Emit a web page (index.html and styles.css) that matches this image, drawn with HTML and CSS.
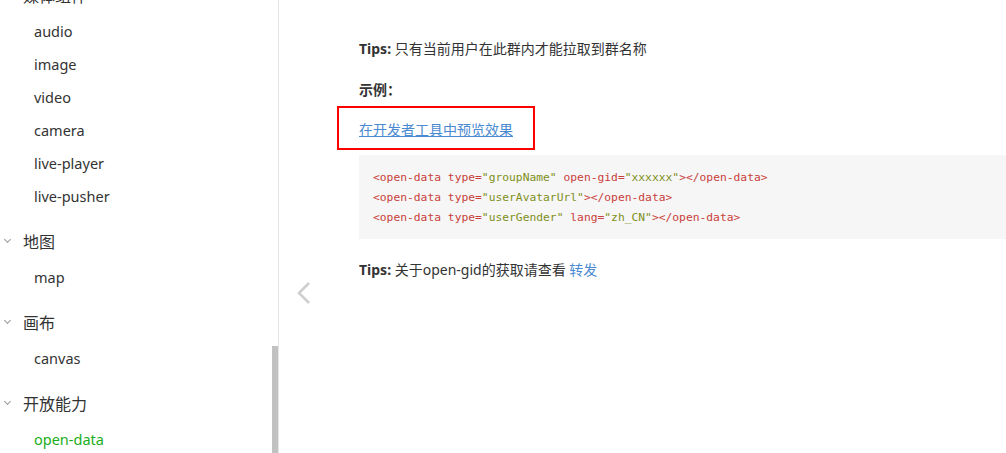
FILE: index.html
```html
<!DOCTYPE html>
<html lang="zh-CN">
<head>
<meta charset="utf-8">
<title>open-data</title>
<link rel="stylesheet" href="styles.css">
</head>
<body>
<div class="page">
  <nav class="sidebar">
    <div class="menu">
      <div class="group">
        <div class="group-title"><span class="caret"></span>媒体组件</div>
        <a class="item">audio</a>
        <a class="item">image</a>
        <a class="item">video</a>
        <a class="item">camera</a>
        <a class="item">live-player</a>
        <a class="item">live-pusher</a>
      </div>
      <div class="group">
        <div class="group-title"><span class="caret"></span>地图</div>
        <a class="item">map</a>
      </div>
      <div class="group">
        <div class="group-title"><span class="caret"></span>画布</div>
        <a class="item">canvas</a>
      </div>
      <div class="group">
        <div class="group-title"><span class="caret"></span>开放能力</div>
        <a class="item active">open-data</a>
      </div>
    </div>
    <div class="scroll-thumb"></div>
  </nav>
  <main class="content">
    <button class="prev" aria-label="上一页">
      <svg width="18" height="24" viewBox="0 0 18 24"><path d="M14 2 L4 12 L14 22" fill="none" stroke="#cfcfcf" stroke-width="2.6"/></svg>
    </button>
    <div class="article">
      <p class="tip"><strong>Tips:</strong> 只有当前用户在此群内才能拉取到群名称</p>
      <p class="label"><strong class="cjk">示例：</strong></p>
      <p class="demo"><a class="demo-link" href="#">在开发者工具中预览效果</a></p>
      <pre class="code"><code><span class="t">&lt;open-data</span> <span class="a">type=</span><span class="v">"groupName"</span> <span class="a">open-gid=</span><span class="v">"xxxxxx"</span><span class="t">&gt;&lt;/open-data&gt;</span>
<span class="t">&lt;open-data</span> <span class="a">type=</span><span class="v">"userAvatarUrl"</span><span class="t">&gt;&lt;/open-data&gt;</span>
<span class="t">&lt;open-data</span> <span class="a">type=</span><span class="v">"userGender"</span> <span class="a">lang=</span><span class="v">"zh_CN"</span><span class="t">&gt;&lt;/open-data&gt;</span></code></pre>
      <p class="tip tip-last"><strong>Tips:</strong> 关于open-gid的获取请查看 <a class="link" href="#">转发</a></p>
    </div>
  </main>
</div>
</body>
</html>
```

FILE: styles.css
```css
html, body {
  margin: 0;
  padding: 0;
  background: #fff;
}
body {
  width: 1006px;
  height: 453px;
  overflow: hidden;
  font-family: "Noto Sans", "Noto Sans CJK SC", sans-serif;
  color: #333;
}
.page {
  display: flex;
  height: 453px;
}
.sidebar {
  position: relative;
  width: 278px;
  flex: 0 0 278px;
  border-right: 1px solid #e6e6e6;
  overflow: hidden;
}
.menu {
  margin-top: -36px;
}
.group {
  display: flex;
  flex-direction: column;
  padding-top: 9px;
}
.group:first-child {
  padding-top: 11px;
}
.group-title {
  display: flex;
  align-items: center;
  height: 39px;
  padding-left: 23px;
  position: relative;
  font-size: 16px;
  color: #333;
}
.caret {
  position: absolute;
  left: 5px;
  top: 16px;
  width: 4px;
  height: 4px;
  border-right: 1.3px solid #9a9a9a;
  border-bottom: 1.3px solid #9a9a9a;
  transform: rotate(45deg);
}
.item {
  display: flex;
  align-items: center;
  height: 33px;
  padding-left: 34px;
  font-size: 14.5px;
  color: #333;
  text-decoration: none;
}
.item.active {
  color: #1aad19;
}
.scroll-thumb {
  position: absolute;
  right: 0;
  top: 346px;
  width: 6px;
  height: 107px;
  background: #c1c1c1;
}
.content {
  position: relative;
  flex: 1;
  padding-left: 80px;
  overflow: hidden;
}
.prev {
  position: absolute;
  left: 16px;
  top: 281px;
  padding: 0;
  border: 0;
  background: none;
  width: 18px;
  height: 24px;
}
.prev svg {
  display: block;
}
.article {
  width: 720px;
  padding-top: 37px;
  font-size: 14px;
}
.article p {
  margin: 0 0 16px;
  line-height: 24px;
}
.article strong {
  font-weight: 700;
  color: #333;
}
.article strong.cjk {
  font-family: "Noto Sans CJK SC", sans-serif;
}
.demo {
  position: relative;
  width: 156px;
}
.demo::after {
  content: "";
  position: absolute;
  left: -22px;
  right: -20px;
  top: -12px;
  bottom: -8px;
  border: 2px solid #f00;
  pointer-events: none;
}
.article p.demo {
  margin-bottom: 13px;
}
.demo-link {
  color: #4a8ad0;
  text-decoration: underline;
}
.link {
  color: #4a8ad0;
  text-decoration: none;
}
.code {
  margin: 0;
  padding: 13px 14px 11px;
  background: #f6f6f6;
  font-family: "Liberation Mono", "DejaVu Sans Mono", monospace;
  font-size: 11.3px;
  line-height: 20px;
  color: #c24a3f;
}
.code .t { color: #c9403a; }
.code .a { color: #c9403a; }
.code .v { color: #7e9020; }
.article p.tip-last {
  margin-top: 19px;
}
```
